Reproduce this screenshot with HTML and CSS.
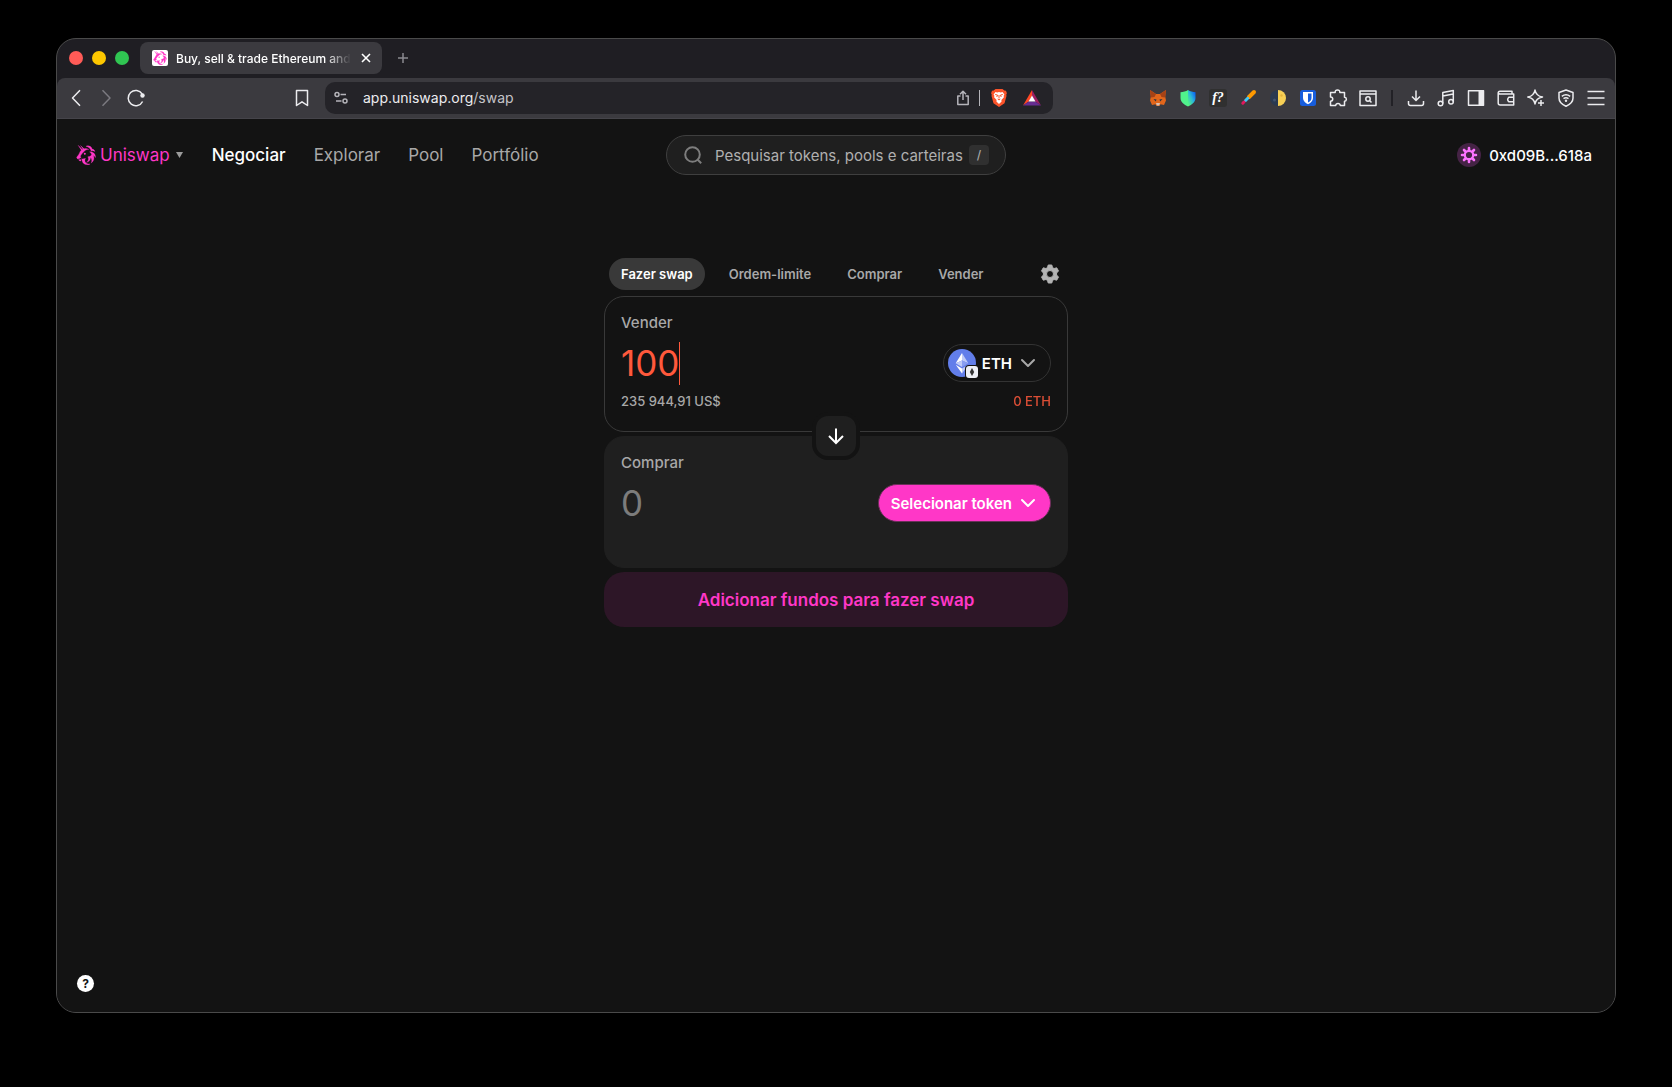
FILE: index.html
```html
<!DOCTYPE html>
<html lang="pt">
<head>
<meta charset="utf-8">
<meta name="viewport" content="width=device-width, initial-scale=1">
<title>Uniswap</title>
<link rel="stylesheet" href="styles.css">
</head>
<body>
<svg class="defs" aria-hidden="true">
  <symbol id="unicorn" viewBox="0 0 20 20">
    <path fill="currentColor" stroke="currentColor" stroke-width=".3" d="M2.200.3 6.400 4.600 5.400 5.200ZM4.600.6 8 3.800 7 4.300ZM6.500 4.500C8.500 3.200 11 3.300 12.800 4.600 10.900 4.500 9.300 5 8.300 6.300 7.300 7.500 6.200 8 5.400 9.500L4.300 11.200 5.200 12.300 3.600 13.600 1.500 13.900.6 12.400C1.700 10.800 2.900 9.600 3.500 8 4 6.600 4.800 5.300 6.500 4.500ZM10 1.200C13.500.2 15.700 1.600 16.100 4.100 17.600 4.100 18.600 5 18.900 6.600 17.500 5.700 16.300 5.700 15.200 6 14.600 3.600 12.800 2 10 1.200ZM13.600 6.900C17.200 6.500 19.600 9 19.500 12.600 19 11.400 18.300 10.700 17.400 10.400 18.600 13.200 17.800 16.300 15.200 18 16.200 15.800 15.900 14 14.600 12.600 14.500 15.300 13 17 10.400 17.400 12.600 15.700 13 13.700 11.800 11.800 14 11.600 15.300 10.900 15.600 9.600 15.300 8.300 14.600 7.500 13.600 6.900ZM5.600 13.800C7.400 14.200 8.300 13.100 9.500 13.500 8.700 15 8.400 16.400 10 18 11 18.900 12.600 19.200 14.200 18.900 11.700 20.300 8.800 19.900 7.200 18 6.100 16.700 6.200 15.300 5.600 13.800ZM2.500 14.700 4.800 14.400 5 16 3.700 15.900Z"/>
    <circle cx="8.800" cy="8.800" r="1" fill="currentColor"/>
  </symbol>
  <symbol id="chevron" viewBox="0 0 16 16"><path d="m2 5 6 6 6-6" fill="none" stroke="currentColor" stroke-width="2" stroke-linecap="round" stroke-linejoin="round"/></symbol>
</svg>

<div class="window">
  <div class="tabstrip">
    <div class="lights"><span class="light close"></span><span class="light min"></span><span class="light max"></span></div>
    <div class="tab">
      <span class="favicon"><svg><use href="#unicorn"/></svg></span>
      <span class="tab-title">Buy, sell &amp; trade Ethereum and</span>
      <button class="bare" aria-label="Close tab"><svg class="i10" viewBox="0 0 10 10"><path d="m1 1 8 8M9 1 1 9" stroke="#fff" stroke-width="1.600"/></svg></button>
    </div>
    <button class="bare newtab" aria-label="New tab"><svg class="i12" viewBox="0 0 12 12"><path d="M6 1v10M1 6h10" stroke="#8b8a90" stroke-width="1.500"/></svg></button>
  </div>

  <div class="toolbar">
    <div class="side">
      <div class="history">
        <button class="bare" aria-label="Back"><svg class="i18" viewBox="0 0 18 18"><path d="M13 1.200 5.500 9l7.500 7.800" class="ln"/></svg></button>
        <button class="bare dim" aria-label="Forward"><svg class="i18" viewBox="0 0 18 18"><path d="m5.500 1.200 7.500 7.800-7.500 7.800" class="ln"/></svg></button>
        <button class="bare" aria-label="Reload"><svg class="i18" viewBox="0 0 18 18"><path d="M15.600 12.500A7.600 7.600 0 1 1 15.200 5" class="ln"/><circle cx="15.500" cy="6.500" r="2.200" fill="currentColor"/></svg></button>
      </div>
      <button class="bare" aria-label="Bookmark"><svg class="i18" viewBox="0 0 18 18"><path d="M3.500 1.500h11v15L9 12.800l-5.500 3.700z" class="ln"/></svg></button>
    </div>
    <div class="urlbar">
      <button class="bare" aria-label="Site settings"><svg class="i14 grey" viewBox="0 0 14 14"><g class="ln"><circle cx="3" cy="3.500" r="2"/><path d="M6.500 3.500H12M2 10h5.500"/><circle cx="11" cy="10" r="2"/></g></svg></button>
      <div class="url">app.uniswap.org<span>/swap</span></div>
      <button class="bare" aria-label="Share"><svg class="i16 grey" viewBox="0 0 16 16"><path d="M5.500 6H2.800v8.500h10.400V6h-2.700M8 10V1.500M5 4.200l3-3 3 3" class="ln"/></svg></button>
      <span class="urlsep"></span>
      <button class="bare" aria-label="Brave Shields"><svg class="i18" viewBox="0 0 18 18"><path d="M5.500 0h7l1.800 1.500 1.700.2.900 2.500-.6 1.300.2 1.500-2 7.200L9 18l-5.500-3.800-2-7.200.2-1.500-.6-1.300L2 1.700l1.700-.2z" fill="#fb542b"/><path d="m5.500 3 1.800.4L9 3l1.700.4 1.800-.4 1.900 2.600-.8 1.200.3 1.500-2.500 2.600.2 1.500L9 14.900l-2.600-2.500.2-1.500-2.500-2.600.3-1.500-.8-1.200z" fill="#fff"/><path d="m5.200 5.500 2.300.5-.7 2M12.800 5.500l-2.300.5.7 2M9 6v3.500m-1.300.5L9 11l1.300-1" fill="none" stroke="#fb542b"/></svg></button>
      <button class="bare" aria-label="Brave Rewards"><svg class="i18" viewBox="0 0 18 18"><path d="M9 1v6L5.700 12.500 0 16.500z" fill="#ff4724"/><path d="M9 1v6l3.300 5.500L18 16.500z" fill="#9e1f63"/><path d="M0 16.500h18l-5.700-4H5.700z" fill="#662d91"/><path d="m9 6.500 3.500 6h-7z" fill="#fff"/></svg></button>
    </div>
    <div class="extensions">
      <svg class="i18" viewBox="0 0 18 18"><path d="m1 1 6 4h4l6-4-.8 6.500.8 4-2 4.500-3.500-.8L10.500 17h-3l-1-1.800L3 16l-2-4.500.8-4z" fill="#e2661b"/><path d="m1 1 6 4-1.500 3-3.700.5zM17 1l-6 4 1.500 3 3.700.5z" fill="#a64216"/><path d="m4.500 10 3 .5-.7 2zM13.500 10l-3 .5.700 2z" fill="#233447"/><path d="M7 14h4l-.8 2.500H7.800z" fill="#d7c1b3"/></svg>
      <svg class="i18" viewBox="0 0 18 18"><path d="M9 1C7 2.500 4 3 1.500 3.200V9c0 4 3.500 6.500 7.500 8.500z" fill="#50f28c"/><path d="M9 1c2 1.500 5 2 7.500 2.200V9c0 4-3.500 6.500-7.500 8.500z" fill="url(#shield)"/><defs><linearGradient id="shield" x1="1" y1="0" x2="0" y2="1"><stop stop-color="#004bff"/><stop offset=".5" stop-color="#2bb8d8"/><stop offset="1" stop-color="#5dff70"/></linearGradient></defs></svg>
      <span class="fq">f?</span>
      <svg class="i18" viewBox="0 0 18 18"><g fill="none" stroke-linecap="round"><path d="m10 8 5-5" stroke="#f90" stroke-width="4"/><path d="m6.500 11.500 2.200-2.200" stroke="#41c7f4" stroke-width="3"/><path d="m3.800 14.200 1.200-1.200" stroke="#e0185e" stroke-width="3"/></g></svg>
      <svg class="i18" viewBox="0 0 18 18"><circle cx="9" cy="9" r="8" fill="#2a3950"/><path d="M9 1a8 8 0 0 1 0 16z" fill="#f7cf55"/><circle cx="12.500" cy="6.500" r="1.200" fill="#e5b43c"/><circle cx="5.500" cy="11" r="1.500" fill="#42536e"/></svg>
      <svg class="i18" viewBox="0 0 18 18"><rect x="1" y="1" width="16" height="16" rx="2.500" fill="#175ddc"/><path d="M4 3h10v6c0 3-2.500 5-5 6.200C6.500 14 4 12 4 9z" fill="#fff"/><path d="M9 4.500h3.500V9c0 2-1.500 3.500-3.500 4.500z" fill="#175ddc"/></svg>
      <svg class="i18" viewBox="0 0 18 18"><path d="M1.500 3.500h4.700c-.6-3.500 5.200-3.500 4.600 0h4.700v4.700c2.500.2 2.500 3.800 0 4v4.300h-4.200c-.3-2.600-4.300-2.600-4.600 0H1.500v-4.300c3 0 3-4.300 0-4.300z" class="ln"/></svg>
      <svg class="i18" viewBox="0 0 18 18"><path d="M1 2h16v14.500H1zM1 5h16" class="ln"/><circle cx="9" cy="10" r="2.200" class="ln"/><path d="m10.800 11.800 1.700 1.700" class="ln"/></svg>
      <span class="extsep"></span>
      <svg class="i18" viewBox="0 0 18 18"><path d="M9 1.500V11M5 7.500l4 4 4-4M1.500 12v2.500q0 2 2 2h11q2 0 2-2V12" class="ln"/></svg>
      <svg class="i18" viewBox="0 0 18 18"><g class="ln"><circle cx="3.500" cy="14.500" r="2.300"/><circle cx="14" cy="12.800" r="2.300"/><path d="M5.800 14.500v-11l10.500-2v11.300M5.800 7l10.500-2"/></g></svg>
      <svg class="i18" viewBox="0 0 18 18"><path d="M1.500 1.800h15v14.500h-15z" class="ln"/><path d="M11.500 1.500h5.500v15h-5.500z" fill="currentColor"/></svg>
      <svg class="i18" viewBox="0 0 18 18"><path d="M15 4.700V2.200H3Q1.200 2.200 1.200 4v10q0 2 2 2h13.500V5H3Q1.300 5 1.200 3.500M17 8.300h-5.200q-2.300 2.300 0 4.400H17" class="ln"/></svg>
      <svg class="i18" viewBox="0 0 18 18"><path d="M8 1Q9 7 15.500 8 9 9 8 15 7 9 .8 8 7 7 8 1ZM14 11v6M11 14h6" class="ln"/></svg>
      <svg class="i18" viewBox="0 0 18 18"><path d="m9 1 7 2.500V9c0 4-3.500 6.700-7 8.200C5.500 15.700 2 13 2 9V3.500zM4.800 7.300q4.200-3 8.400 0M6.500 9.600q2.500-1.800 5 0" class="ln"/><circle cx="9" cy="11.800" r="1.200" fill="currentColor"/></svg>
      <svg class="i18" viewBox="0 0 18 18"><path d="M.5 2.500h17M.5 9h17M.5 15.500h17" class="ln"/></svg>
    </div>
  </div>

  <div class="page">
    <header class="nav">
      <nav class="links">
        <a href="#" class="brand"><svg class="i20"><use href="#unicorn"/></svg>Uniswap<svg class="tri" viewBox="0 0 8 6"><path d="M0 0h7L3.500 6z" fill="#9b9b9b"/></svg></a>
        <a href="#" class="active">Negociar</a>
        <a href="#">Explorar</a>
        <a href="#">Pool</a>
        <a href="#">Portfólio</a>
      </nav>
      <label class="search">
        <svg class="i20" viewBox="0 0 20 20"><path d="m14.500 14.500 3.700 3.700" class="ln2"/><circle cx="9.500" cy="9.500" r="7.300" class="ln2"/></svg>
        <input type="text" placeholder="Pesquisar tokens, pools e carteiras" aria-label="Pesquisar tokens, pools e carteiras">
        <kbd>/</kbd>
      </label>
      <div class="right">
        <button class="bare account">
          <svg class="i24" viewBox="0 0 24 24"><circle cx="12" cy="12" r="12" fill="#452345"/><g stroke="#fc72ff" fill="none"><circle cx="12" cy="12" r="4.200" stroke-width="2.200"/><path stroke-width="2.600" stroke-linecap="round" d="M12 5v2M12 17v2M5 12h2M17 12h2M7 7l1.500 1.500M15.500 15.500 17 17M17 7l-1.500 1.500M8.500 15.500 7 17"/></g></svg>
          0xd09B...618a
        </button>
      </div>
    </header>

    <main class="swap">
      <div class="modes">
        <button class="mode on">Fazer swap</button>
        <button class="mode">Ordem-limite</button>
        <button class="mode">Comprar</button>
        <button class="mode">Vender</button>
        <button class="bare gear" aria-label="Configurações"><svg class="i20" viewBox="0 0 20 20"><path fill="#b3b3b3" stroke="#b3b3b3" stroke-linejoin="round" fill-rule="evenodd" d="M8.200 1h3.600l.7 2.600 1.600.9 2.600-.7 1.800 3.100L16.600 9v2l1.900 2.100-1.800 3.100-2.600-.7-1.600.9-.7 2.600H8.200l-.7-2.600-1.600-.9-2.600.7-1.800-3.100L3.400 11V9L1.500 6.900l1.800-3.100 2.600.7 1.600-.9zM10 6.500a3.500 3.500 0 1 0 0 7 3.500 3.500 0 0 0 0-7z"/></svg></button>
      </div>

      <section class="panel sell">
        <label for="sell-amount" class="caption">Vender</label>
        <div class="row">
          <div class="amount error"><input id="sell-amount" type="text" value="100"><span class="caret"></span></div>
          <button class="token">
            <svg class="eth" viewBox="0 0 30 30"><circle cx="14" cy="14" r="14" fill="#627eea"/><path d="M14 4v7.500l6.300 2.800z" fill="#c0cbf7"/><path d="M14 4 7.700 14.300l6.300-2.800z" fill="#fff"/><path d="m14 11.500 6.300 2.800L14 18z" fill="#899ef0"/><path d="M14 11.500V18l-6.300-3.700z" fill="#c0cbf7"/><path d="m7.700 15.800 6.300 8.700v-5z" fill="#fff"/><path d="M20.300 15.800 14 24.500v-5z" fill="#c0cbf7"/><rect x="17" y="16" width="14" height="14" rx="4" fill="#131313"/><rect x="18" y="17" width="12" height="12" rx="3" fill="#eef0f6"/><path d="m24 19 2.200 4L24 27l-2.200-4z" fill="#333"/></svg>
            ETH
            <svg class="i16 chev"><use href="#chevron"/></svg>
          </button>
        </div>
        <div class="row small"><span>235 944,91 US$</span><span class="bad">0 ETH</span></div>
      </section>

      <div class="flip"><button aria-label="Inverter tokens"><svg class="i18" viewBox="0 0 18 18"><path d="M9 1.500v14M2 9l7 7 7-7" fill="none" stroke="#fff" stroke-width="2"/></svg></button></div>

      <section class="panel buy">
        <label for="buy-amount" class="caption">Comprar</label>
        <div class="row">
          <div class="amount"><input id="buy-amount" type="text" placeholder="0"></div>
          <button class="token pick">Selecionar token<svg class="i16 chev"><use href="#chevron"/></svg></button>
        </div>
      </section>

      <button class="cta">Adicionar fundos para fazer swap</button>
    </main>

    <button class="help" aria-label="Ajuda">?</button>
  </div>
</div>
</body>
</html>
```
FILE: styles.css
```css
* { box-sizing: border-box; }

body {
  margin: 0;
  min-height: 100vh;
  padding: 38px 56px 74px;
  display: flex;
  background: #000;
  color: #fff;
  font-family: Inter, "Liberation Sans", sans-serif;
  font-weight: 500;
}

button, input, kbd { font: inherit; color: inherit; }
svg { display: block; flex: none; overflow: visible; }
a { color: inherit; text-decoration: none; }
.defs { position: absolute; width: 0; height: 0; }
.bare { border: 0; padding: 0; background: none; display: flex; align-items: center; cursor: pointer; }
.i10 { width: 10px; height: 10px; }
.i12 { width: 12px; height: 12px; }
.i14 { width: 14px; height: 14px; }
.i16 { width: 16px; height: 16px; }
.i18 { width: 18px; height: 18px; }
.i20 { width: 20px; height: 20px; }
.i24 { width: 24px; height: 24px; }
.ln { fill: none; stroke: currentColor; stroke-width: 1.5; stroke-linejoin: round; }
.ln2 { fill: none; stroke: #7d7d7d; stroke-width: 2; }

.window {
  flex: 1;
  display: flex;
  flex-direction: column;
  border: 1px solid #4a4a4a;
  border-radius: 20px;
  overflow: hidden;
  background: #1f1e23;
}

/* Browser chrome */
.tabstrip { display: flex; align-items: center; height: 39px; padding: 0 12px 1px; }
.lights { display: flex; gap: 9px; margin-right: 11px; }
.light { width: 14px; height: 14px; border-radius: 50%; }
.close { background: #ff5b57; }
.min { background: #fdc700; }
.max { background: #30c552; }
.tab {
  display: flex;
  align-items: center;
  width: 242px;
  height: 32px;
  padding: 0 11px 0 12px;
  border-radius: 8px;
  background: #3b3a3f;
  font-size: 12px;
}
.favicon { width: 16px; height: 16px; border-radius: 2px; background: #fff; color: #ff37c7; display: flex; align-items: center; justify-content: center; margin-right: 8px; }
.favicon svg { width: 14px; height: 14px; }
.tab-title {
  flex: 1;
  overflow: hidden;
  white-space: nowrap;
  margin-right: 10px;
  -webkit-mask-image: linear-gradient(90deg, #000 85%, transparent);
  mask-image: linear-gradient(90deg, #000 85%, transparent);
}
.newtab { margin-left: 15px; }

.toolbar {
  display: flex;
  align-items: center;
  justify-content: space-between;
  height: 41px;
  padding: 0 10px 1px;
  border-radius: 8px 8px 0 0;
  border-bottom: 1px solid #45444a;
  background: #3b3a3f;
  color: #ececef;
}
.side { display: flex; align-items: center; justify-content: space-between; width: 258px; padding: 0 14px 0 0; }
.history { display: flex; gap: 12px; }
.dim { color: #7b7a80; }
.urlbar {
  flex: 0 1 728px;
  display: flex;
  align-items: center;
  height: 32px;
  padding: 0 12px 0 9px;
  border-radius: 10px;
  background: #242328;
  font-size: 14px;
  font-weight: 400;
}
.grey { color: #b5b4ba; }
.url { flex: 1; padding-left: 15px; }
.url span { color: #c4c3c8; }
.urlsep { width: 1px; height: 16px; margin: 0 10px 0 8px; background: #b5b4ba; }
.urlbar .bare + .bare { margin-left: 15px; }
.extensions { flex: 1; display: flex; align-items: center; justify-content: flex-end; gap: 12px; }
.extsep { width: 2px; height: 16px; margin: 0 2px; background: #222126; }
.fq { width: 18px; height: 18px; border-radius: 3px; background: #303030; color: #fff; font: italic 700 14px/17px "Liberation Serif", serif; text-align: center; }

/* Page */
.page { flex: 1; display: flex; flex-direction: column; background: #131313; }
.nav { display: grid; grid-template-columns: 1fr 340px 1fr; align-items: center; height: 72px; padding: 0 19px; }
.links { display: flex; align-items: center; gap: 28px; font-size: 17px; font-weight: 400; color: #a8a8a8; }
.links .active { color: #fff; font-weight: 500; }
.brand { display: flex; align-items: center; gap: 4px; color: #ff37c7; }
.tri { width: 8px; height: 6px; margin-left: 2px; }
.search {
  display: flex;
  align-items: center;
  height: 40px;
  padding: 0 16px;
  border: 1px solid #3f3f3f;
  border-radius: 20px;
  background: #1f1f1f;
}
.search input { flex: 1; min-width: 0; margin: 0 4px 0 12px; padding: 0; border: 0; outline: 0; background: none; font-size: 15px; font-weight: 400; }
.search input::placeholder { color: #b0b0b0; opacity: 1; }
.search kbd { width: 20px; height: 20px; border-radius: 4px; background: #303030; color: #a8a8a8; font-size: 12px; line-height: 20px; text-align: center; }
.right { display: flex; justify-content: flex-end; padding-right: 4px; }
.account { gap: 8px; font-size: 15px; }

.swap { width: 464px; max-width: 100%; margin: 67px auto 0; }
.modes { display: flex; gap: 12px; padding: 0 8px 0 5px; margin-bottom: 6px; }
.mode { height: 32px; padding: 0 12px; border: 0; border-radius: 16px; background: none; color: #a8a8a8; font-size: 13px; font-weight: 600; cursor: pointer; }
.mode.on { background: #393939; color: #fff; }
.gear { margin-left: auto; }

.panel { padding: 16px; border: 1px solid #393939; border-radius: 20px; }
.sell { height: 136px; }
.buy { height: 132px; border-color: #1f1f1f; background: #1f1f1f; }
.caption { display: block; color: #a8a8a8; font-size: 15px; line-height: 20px; }
.row { display: flex; align-items: center; justify-content: space-between; height: 60px; }
.small { height: 16px; font-size: 13px; color: #a8a8a8; }
.bad { color: #ff593c; opacity: .85; }
.amount { display: flex; align-items: center; flex: 1; font-size: 35px; font-weight: 400; }
.amount input { field-sizing: content; padding: 0; border: 0; outline: 0; background: none; line-height: 44px; }
.amount input::placeholder { color: #7c7c7c; opacity: 1; }
.error { color: #ff593c; }
.caret { width: 1px; height: 43px; background: #ff593c; }
.token {
  display: flex;
  align-items: center;
  height: 38px;
  padding: 0 14px 0 4px;
  border: 1px solid #333;
  border-radius: 19px;
  background: #131313;
  font-size: 15px;
  font-weight: 600;
  cursor: pointer;
}
.eth { width: 30px; height: 30px; margin: 2px 4px 0 0; }
.chev { margin-left: 8px; color: #a8a8a8; }
.pick { height: 38px; padding: 0 14px 0 12px; border-color: #6b3059; background: #ff37c7; }
.pick .chev { color: #fff; }

.flip { position: relative; display: flex; justify-content: center; height: 4px; }
.flip button {
  position: absolute;
  top: -20px;
  width: 48px;
  height: 48px;
  display: flex;
  align-items: center;
  justify-content: center;
  padding: 0;
  border: 4px solid #131313;
  border-radius: 16px;
  background: #1f1f1f;
}
.cta { display: block; width: 100%; height: 55px; margin-top: 4px; border: 0; border-radius: 20px; background: #2d1627; color: #ff37c7; font-size: 17px; font-weight: 600; cursor: pointer; }

.help { width: 17px; height: 17px; margin: auto 0 20px 20px; padding: 0; border: 0; border-radius: 50%; background: #fff; color: #131313; font-size: 12px; font-weight: 700; line-height: 17px; text-align: center; }
```
